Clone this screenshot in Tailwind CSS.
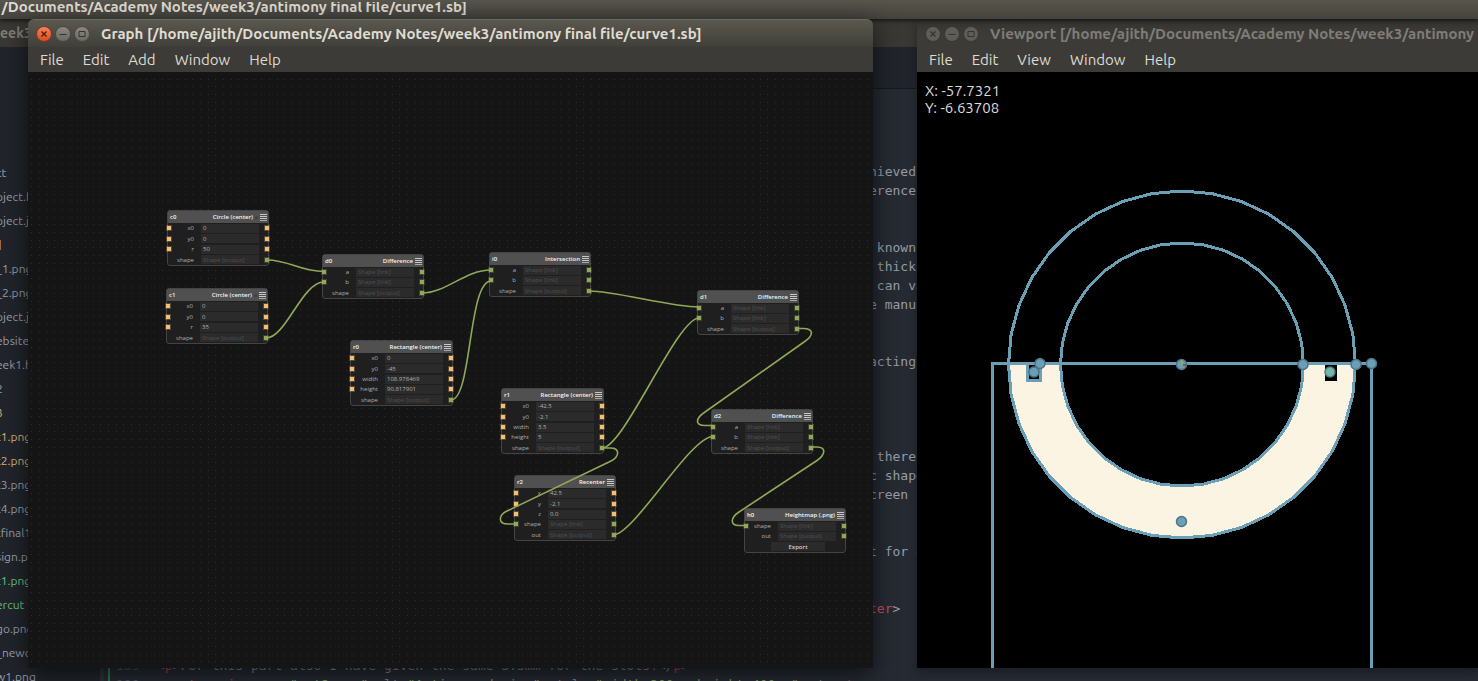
<!DOCTYPE html>
<html lang="en">
<head>
<meta charset="utf-8">
<meta name="viewport" content="width=device-width, initial-scale=1">
<title>Antimony</title>
<script src="https://cdn.jsdelivr.net/npm/@tailwindcss/browser@4"></script>
</head>
<body class="relative h-screen overflow-hidden bg-[#262a32] font-['Ubuntu','Noto_Sans',sans-serif]">

<!-- Editor behind the two Antimony windows -->
<div class="flex h-full flex-col">
  <header class="relative z-10 flex h-[19px] shrink-0 items-center bg-linear-to-b from-[#58554c] to-[#44433e] shadow-[0_1px_5px_rgba(0,0,0,0.8)]">
    <div class="flex w-[467px] justify-end overflow-hidden">
      <h1 class="-mt-[5px] whitespace-nowrap text-[15px] leading-5 font-bold text-[#dfdbd2]">/Documents/Academy Notes/week3/antimony final file/curve1.sb]</h1>
    </div>
  </header>
  <div class="flex h-7 shrink-0 items-center bg-[#393834] text-[14px] font-bold text-[#807d78]">eek3</div>
  <div class="flex min-h-0 flex-1">
    <nav aria-label="Files" class="w-[100px] shrink-0 overflow-hidden bg-[#21252b] pt-[114px] text-[12px] leading-6 whitespace-nowrap text-[#989fac]">
      <ul class="-ml-1">
        <li>ct</li>
        <li>oject.h</li>
        <li>oject.j</li>
        <li class="flex h-6 items-center pl-1"><span class="h-2.5 w-px bg-[#a5683f]"></span></li>
        <li>_1.png</li>
        <li>_2.png</li>
        <li>oject.j</li>
        <li>ebsite.</li>
        <li>eek1.h</li>
        <li>2</li>
        <li class="text-[#dab478]">3</li>
        <li class="text-[#dab478]">t1.png</li>
        <li class="text-[#dab478]">t2.png</li>
        <li>t3.png</li>
        <li>t4.png</li>
        <li>tfinal1</li>
        <li>sign.p</li>
        <li class="text-[#63c480]">t1.png</li>
        <li class="text-[#63c480]">ercut</li>
        <li>go.png</li>
        <li>_newd</li>
        <li>w1.png</li>
      </ul>
    </nav>
    <div class="w-1 shrink-0 bg-[#2e323a]"></div>
    <main class="flex min-w-0 flex-1 flex-col font-['DejaVu_Sans_Mono',monospace] text-[13px] leading-[19px] text-[#989ea9]">
      <div class="h-[42px] shrink-0 border-b border-[#16191d] bg-[#21252b]"></div>
      <div class="flex flex-1 flex-col">
        <pre class="ml-[765px] h-[567px] shrink-0 overflow-hidden pt-[73px] font-[inherit]">hieved
erence


 known
 thick
 can va
e manuf


acting




 there
c shape
creen


t for a


<span class="text-[#c2505a]">ter</span>&gt;
</pre>
        <div class="flex text-[#7c828d]">
          <div class="w-1"></div>
          <div class="w-0.5 bg-[#2f7a55]"></div>
          <pre class="w-[47px] pl-1.5 font-[inherit] text-[#4b5263]">189
190</pre>
          <pre class="font-[inherit]">&lt;<span class="text-[#a8454f]">p</span>&gt;For this part also I have given the same 3.5mm for the slots!&lt;/<span class="text-[#a8454f]">p</span>&gt;
&lt;<span class="text-[#a8454f]">center</span>&gt;&lt;<span class="text-[#a8454f]">img</span> src=<span class="text-[#7f9f62]">"out2.png"</span> alt=<span class="text-[#7f9f62]">"Antimony design"</span> style=<span class="text-[#7f9f62]">"width:300px;height:400px"</span>&gt;&lt;/<span class="text-[#a8454f]">center</span>&gt;</pre>
        </div>
      </div>
    </main>
  </div>
</div>

<!-- Graph window -->
<section aria-label="Graph" class="absolute top-[19px] bottom-[13px] left-7 z-10 flex w-[845px] flex-col overflow-hidden rounded-t-md shadow-[0_6px_24px_rgba(0,0,0,0.65)]">
  <header class="flex h-[28px] shrink-0 items-center border-t border-[#6b695c] bg-linear-to-b from-[#5a584e] to-[#403f3a] pt-px pl-2">
    <div class="flex gap-[3px]">
      <button aria-label="Close" class="grid size-4 place-items-center rounded-full border border-[#7c3a20] bg-linear-to-b from-[#f4835b] to-[#df4a1a]"><svg class="size-2" viewBox="0 0 8 8" fill="none" stroke="#4a1d0c" stroke-width="1.3"><path d="M1.5 1.5l5 5M6.5 1.5l-5 5"/></svg></button>
      <button aria-label="Minimize" class="grid size-4 place-items-center rounded-full border border-[#4a4943] bg-linear-to-b from-[#8a8880] to-[#6b6963]"><svg class="size-2" viewBox="0 0 8 8" fill="none" stroke="#34332f"><path d="M0.5 4.5h7"/></svg></button>
      <button aria-label="Maximize" class="grid size-4 place-items-center rounded-full border border-[#4a4943] bg-linear-to-b from-[#8a8880] to-[#6b6963]"><svg class="size-2" viewBox="0 0 8 8" fill="none" stroke="#34332f"><path d="M1 1.5h6v5h-6z"/></svg></button>
    </div>
    <h2 class="ml-[11px] pt-px whitespace-nowrap text-[15px] font-bold text-[#dfdbd2]">Graph [/home/ajith/Documents/Academy Notes/week3/antimony final file/curve1.sb]</h2>
  </header>
  <nav aria-label="Graph menu" class="flex h-[25px] shrink-0 items-center gap-[19px] bg-[#3c3b37] pt-0.5 pl-3 text-[15px] text-[#dfdbd2]">
    <button>File</button><button>Edit</button><button>Add</button><button>Window</button><button>Help</button>
  </nav>
  <div id="canvas" class="relative min-h-0 flex-1 overflow-hidden bg-[#151515]">
    <svg class="absolute inset-0 size-full" aria-hidden="true">
      <defs>
        <pattern id="dots" x="3" y="7" width="23" height="23" patternUnits="userSpaceOnUse">
          <path fill="#2d2d2d" d="M0 0h1v1h-1zM8 0h1v1h-1zM16 0h1v1h-1zM0 7h1v1h-1zM8 7h1v1h-1zM16 7h1v1h-1zM0 15h1v1h-1zM8 15h1v1h-1zM16 15h1v1h-1z"/>
        </pattern>
      </defs>
      <rect width="100%" height="100%" fill="url(#dots)"/>
    </svg>
    <div id="nodes"></div>
    <svg class="pointer-events-none absolute inset-0 size-full" aria-hidden="true">
      <g transform="translate(-28 -72)" fill="none" stroke="#90a959" stroke-width="1.6">
        <path d="M267 260C289 260 300 271.500 324 271.500"/>
        <path d="M266 338C286 338 302 282 324 282"/>
        <path d="M422 293C446 293 465 270 491 270"/>
        <path d="M451 400C472 400 468 281 491 281"/>
        <path d="M589 291C616 291 670 307 699 307"/>
        <path d="M602 448C624 448 677 318 699 318"/>
        <path d="M613 535C634 535 690 436.500 713 436.500"/>
        <path d="M796 328.500h7C814 328.500 814 335.400 804 342L705 412C695 418.600 695 425.500 705 425.500h8"/>
        <path d="M810 447h7C827 447 825 455 817 460.500L739 512C730 518 730 525.500 739 525.500h7"/>
        <path d="M602 448h8C620 448 620 456 611 461L507 511C498 515.500 498 524 508 524h8"/>
      </g>
    </svg>
  </div>
</section>

<!-- Viewport window -->
<section aria-label="Viewport" class="absolute top-[19px] right-0 bottom-[13px] left-[917px] flex flex-col overflow-hidden bg-black shadow-[0_4px_10px_rgba(0,0,0,0.35)]">
  <header class="flex h-[28px] shrink-0 items-center bg-linear-to-b from-[#34332f] to-[#3c3b37] to-50% pt-px pl-2">
    <div class="flex gap-[3px]">
      <button aria-label="Close" class="grid size-4 place-items-center rounded-full border border-[#383732] bg-[#5e5d58]"><svg class="size-2" viewBox="0 0 8 8" fill="none" stroke="#35342f" stroke-width="1.3"><path d="M1.5 1.5l5 5M6.5 1.500l-5 5"/></svg></button>
      <button aria-label="Minimize" class="grid size-4 place-items-center rounded-full border border-[#383732] bg-[#5e5d58]"><svg class="size-2" viewBox="0 0 8 8" fill="none" stroke="#35342f"><path d="M0.5 4.5h7"/></svg></button>
      <button aria-label="Maximize" class="grid size-4 place-items-center rounded-full border border-[#383732] bg-[#5e5d58]"><svg class="size-2" viewBox="0 0 8 8" fill="none" stroke="#35342f"><path d="M1 1.5h6v5h-6z"/></svg></button>
    </div>
    <h2 class="ml-[11px] pt-px whitespace-nowrap text-[15px] font-bold text-[#807d78]">Viewport [/home/ajith/Documents/Academy Notes/week3/antimony final file/curve1.sb]</h2>
  </header>
  <nav aria-label="Viewport menu" class="flex h-[25px] shrink-0 items-center gap-[19px] bg-[#3c3b37] pt-0.5 pl-3 text-[15px] text-[#dfdbd2]">
    <button>File</button><button>Edit</button><button>View</button><button>Window</button><button>Help</button>
  </nav>
  <div class="relative min-h-0 flex-1 overflow-hidden">
    <svg class="absolute inset-0 size-full" role="img" aria-label="Half ring with two slots">
      <g transform="translate(-917 -72)">
        <path fill="#fcf4e3" d="M1008 364.500A174 174 0 0 0 1356 364.500H1303A121 121 0 0 1 1061 364.500Z"/>
        <path fill="#000" d="M1325 365h12v16h-12zM1027 365h14v16h-14z"/>
        <g id="outlines" fill="none" stroke="#6a9fb5" stroke-width="3" shape-rendering="crispEdges">
          <path d="M992.500 668V363.500H1371.500V668"/>
          <path d="M1027.500 365v15.500h13V365"/>
        </g>
        <g fill="#6a9fb5" stroke="#4d7489" stroke-width="1.500">
          <circle cx="1040" cy="363.500" r="5"/>
          <circle cx="1034" cy="372" r="5"/>
          <circle cx="1181.500" cy="364.500" r="5"/>
          <circle cx="1303" cy="364.500" r="5"/>
          <circle cx="1356" cy="364.500" r="5"/>
          <circle cx="1371.500" cy="363.500" r="5"/>
          <circle cx="1181.500" cy="521.500" r="5"/>
          <circle cx="1330" cy="372" r="5" fill="#75b5aa" stroke="#4f8279"/>
        </g>
        <path d="M1182 360v5" stroke="#90a959" stroke-width="2"/>
        <path d="M1183 365h3" stroke="#ac4142" stroke-width="2"/>
      </g>
    </svg>
    <p class="relative pt-2.5 pl-2 text-[15px] leading-[17px] text-[#dcdcdc]">X: -57.7321<br>Y: -6.63708</p>
  </div>
</section>

<script>
const L = 'Shape [link]', O = 'Shape [output]';
// id, title, x, y, width, height, rows: [label, value, left port, right port]  (o orange, g green, - none)
const nodes = [
  ['c0', 'Circle (center)', 139, 138, 102, 56, [['x0','0','o','o'],['y0','0','o','o'],['r','50','o','o'],['shape',O,'-','g']]],
  ['c1', 'Circle (center)', 138, 216, 102, 56, [['x0','0','o','o'],['y0','0','o','o'],['r','35','o','o'],['shape',O,'-','g']]],
  ['d0', 'Difference', 294, 182, 102, 45, [['a',L,'g','g'],['b',L,'g','g'],['shape',O,'-','g']]],
  ['i0', 'Intersection', 461, 180, 102, 45, [['a',L,'g','g'],['b',L,'g','g'],['shape',O,'-','g']]],
  ['r0', 'Rectangle (center)', 322, 268, 103, 66, [['x0','0','o','o'],['y0','-45','o','o'],['width','108.978469','o','o'],['height','90.817901','o','o'],['shape',O,'-','g']]],
  ['r1', 'Rectangle (center)', 473, 316, 103, 66, [['x0','-42.5','o','o'],['y0','-2.1','o','o'],['width','3.5','o','o'],['height','5','o','o'],['shape',O,'-','g']]],
  ['d1', 'Difference', 669, 218, 102, 45, [['a',L,'g','g'],['b',L,'g','g'],['shape',O,'-','g']]],
  ['d2', 'Difference', 683, 337, 102, 45, [['a',L,'g','g'],['b',L,'g','g'],['shape',O,'-','g']]],
  ['r2', 'Recenter', 486, 403, 102, 66, [['x','42.5','o','o'],['y','-2.1','o','o'],['z','0.0','o','o'],['shape',L,'g','g'],['out',O,'-','g']]],
  ['h0', 'Heightmap (.png)', 716, 436, 102, 45, [['shape',L,'g','g'],['out',O,'-','g']]],
];
const ports = {
  o: '<span class="-mx-px size-1 shrink-0 bg-[#f4bf75] outline outline-[#f4bf75]/25"></span>',
  g: '<span class="-mx-px size-1 shrink-0 bg-[#90a959] outline outline-[#90a959]/25"></span>',
  '-': '<span class="-mx-px size-1 shrink-0"></span>',
};
document.getElementById('nodes').innerHTML = nodes.map(([id, title, x, y, w, h, rows]) => `
  <article class="absolute flex flex-col rounded-[3px] border border-[#444444] bg-[#1f1f1f] font-['Open_Sans',sans-serif] text-[6px] leading-[8px] text-[#b0b0b0]" style="left:${x}px;top:${y}px;width:${w}px;height:${h}px">
    <header class="flex h-3 shrink-0 items-center bg-[#505050] pr-px pl-0.5 font-semibold text-[#f4f4f4]">
      <span class="flex-1">${id}</span><span>${title}</span>
      ${title === 'Circle (center)' ? '<span class="ml-0.5 size-[3px] rounded-t-full bg-[#414141]"></span>' : ''}
      <button aria-label="${id} menu" class="ml-0.5 flex w-[7px] flex-col gap-px"><span class="h-px bg-[#c8c8c8]"></span><span class="h-px bg-[#c8c8c8]"></span><span class="h-px bg-[#c8c8c8]"></span><span class="h-px bg-[#a8a8a8]"></span></button>
    </header>
    ${rows.map(([name, value, l, r]) => `
    <div class="flex min-h-0 flex-1 items-center justify-between">
      ${ports[l]}
      <label class="flex min-w-0 flex-1 items-center gap-[7px] pr-[7px] pl-1.5"><span class="flex-1 text-right">${name}</span><input class="${value[0] === 'S' ? 'h-[9px] w-[58px] bg-[#2b2b2b] px-0.5 text-[#505050]' : 'h-[9px] w-[58px] bg-[#2b2b2b] px-0.5 text-[#b0b0b0]'}" value="${value}"></label>
      ${ports[r]}
    </div>`).join('')}
    ${id === 'h0' ? '<div class="flex min-h-0 flex-1 items-center justify-center pl-1.5"><button class="h-[9px] w-[54px] bg-[#2b2b2b] font-semibold text-[#d0d0d0]">Export</button></div>' : ''}
  </article>`).join('');

// Circle outlines are drawn as polygons, as the viewport does
const circle = (r, n) => Array.from({ length: n }, (_, i) => {
  const a = 2 * Math.PI * i / n + Math.PI / 2;
  return (1182 + r * Math.cos(a)).toFixed(1) + ',' + (364.5 + r * Math.sin(a)).toFixed(1);
}).join(' ');
for (const r of [173.5, 121.5]) {
  const p = document.createElementNS('http://www.w3.org/2000/svg', 'polygon');
  p.setAttribute('points', circle(r, 36));
  document.getElementById('outlines').append(p);
}
</script>
</body>
</html>
